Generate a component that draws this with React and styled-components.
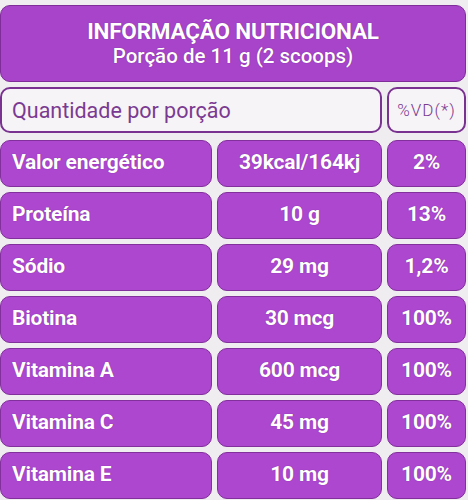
import React from "react";
import styled, { createGlobalStyle } from "styled-components";

const GlobalStyle = createGlobalStyle`
  html, body {
    margin: 0;
    padding: 0;
    background: #efedf0;
  }
  body {
    font-family: Roboto, "Noto Sans", "Liberation Sans", sans-serif;
  }
`;

const Label = styled.div`
  width: 468px;
  height: 500px;
  overflow: hidden;
  box-sizing: border-box;
  padding: 5px 2px 0 0;
  background: #efedf0;
`;

const Table = styled.div`
  display: grid;
  grid-template-columns: 212px 165px 79px;
  grid-template-rows: 77px 48px repeat(7, 47px);
  column-gap: 5px;
  row-gap: 5px;
`;

const Header = styled.div`
  grid-column: 1 / -1;
  box-sizing: border-box;
  background: #a744ca;
  border: 1.5px solid #7e2d99;
  border-radius: 10px;
  color: #fff;
  display: flex;
  flex-direction: column;
  align-items: center;
  justify-content: center;
  gap: 0;
  padding: 2px 0 4px;
  text-shadow: 0 0 1px rgba(70, 0, 90, 0.6);
`;

const Title = styled.div`
  font-size: 22.5px;
  font-weight: 700;
  line-height: 26px;
  letter-spacing: -0.2px;
`;

const Subtitle = styled.div`
  font-size: 20.5px;
  font-weight: 500;
  line-height: 24px;
`;

const Plain = styled.div`
  grid-column: ${(p) => p.$span || "auto"};
  align-self: start;
  height: 46px;
  box-sizing: border-box;
  background: #f6f4f6;
  border: 2px solid #7a3291;
  border-radius: 10px;
  color: #7b3a92;
  display: flex;
  align-items: center;
  justify-content: ${(p) => (p.$center ? "center" : "flex-start")};
  padding: 0 ${(p) => (p.$center ? "0" : "10px")};
  font-size: ${(p) => (p.$small ? "17px" : "21.5px")};
  font-weight: ${(p) => (p.$small ? 300 : 400)};
  letter-spacing: ${(p) => (p.$small ? "1px" : "0")};
`;

const Cell = styled.div`
  box-sizing: border-box;
  background: #ad47d0;
  border: 1.5px solid #82309b;
  border-radius: 10px;
  color: #fff;
  display: flex;
  align-items: center;
  justify-content: ${(p) => (p.$center ? "center" : "flex-start")};
  padding: 0 ${(p) => (p.$center ? "0" : "11px")} 3px;
  font-size: 21px;
  font-weight: 700;
  letter-spacing: -0.2px;
  text-shadow: 0 0 1px rgba(70, 0, 90, 0.6);
`;

const rows = [
  ["Valor energético", "39kcal/164kj", "2%"],
  ["Proteína", "10 g", "13%"],
  ["Sódio", "29 mg", "1,2%"],
  ["Biotina", "30 mcg", "100%"],
  ["Vitamina A", "600 mcg", "100%"],
  ["Vitamina C", "45 mg", "100%"],
  ["Vitamina E", "10 mg", "100%"],
];

export default function App() {
  return (
    <>
      <GlobalStyle />
      <Label>
        <Table>
          <Header>
            <Title>INFORMAÇÃO NUTRICIONAL</Title>
            <Subtitle>Porção de 11 g (2 scoops)</Subtitle>
          </Header>
          <Plain $span="1 / 3">Quantidade por porção</Plain>
          <Plain $center $small>%VD(*)</Plain>
          {rows.map(([name, amount, vd]) => (
            <React.Fragment key={name}>
              <Cell>{name}</Cell>
              <Cell $center>{amount}</Cell>
              <Cell $center>{vd}</Cell>
            </React.Fragment>
          ))}
        </Table>
      </Label>
    </>
  );
}
